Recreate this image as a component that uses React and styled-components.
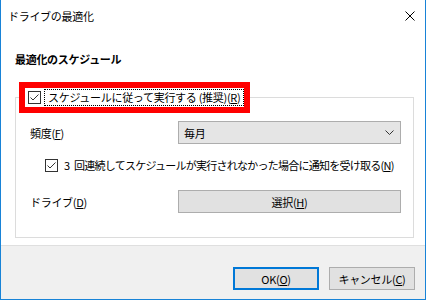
import React from 'react';
import styled, { createGlobalStyle } from 'styled-components';

const GlobalStyle = createGlobalStyle`
  html, body {
    margin: 0;
    padding: 0;
    background: #ffffff;
  }
  body {
    font-family: "Noto Sans CJK JP", "Noto Sans", sans-serif;
    font-size: 11px;
    color: #000000;
  }
`;

const Window = styled.div`
  width: 426px;
  height: 300px;
  box-sizing: border-box;
  border: 1px solid #1883d7;
  border-top: none;
  display: flex;
  flex-direction: column;
  background: #ffffff;
`;

const TitleBar = styled.div`
  height: 31px;
  flex: none;
  display: flex;
  align-items: center;
  justify-content: space-between;
  padding: 0 10px 0 7px;
`;

const Title = styled.span`
  font-size: 11px;
  letter-spacing: -0.3px;
  line-height: 16px;
`;

const Content = styled.div`
  flex: 1;
  display: flex;
  flex-direction: column;
  padding: 20px 11px 7px 14px;
`;

const Heading = styled.h2`
  margin: 0;
  font-size: 11px;
  font-weight: bold;
  line-height: 16px;
  letter-spacing: -0.3px;
`;

const Group = styled.fieldset`
  margin: 21px 0 0 0;
  padding: 0;
  border: 1px solid #dcdcdc;
  min-width: 0;
`;

const Legend = styled.legend`
  margin-left: 9px;
  padding: 0 0 0 3px;
  height: 19px;
  display: flex;
  align-items: center;
  gap: 3px;
  outline: 6px solid #ff0000;
`;

const Focus = styled.span`
  border: 1px dotted #000000;
  padding: 0 3px;
  line-height: 15px;
  letter-spacing: -0.3px;
`;

const GroupBody = styled.div`
  padding: 14px 12px 24px 14px;
  display: flex;
  flex-direction: column;
`;

const Row = styled.div`
  display: grid;
  grid-template-columns: 148px 1fr;
  align-items: center;
  margin-top: ${(p) => p.$mt || 0}px;
`;

const Label = styled.span`
  letter-spacing: -0.3px;
  line-height: 16px;
`;

const Select = styled.div`
  height: 23px;
  box-sizing: border-box;
  border: 1px solid #adadad;
  background: #e5e5e5;
  display: flex;
  align-items: center;
  justify-content: space-between;
  padding: 0 6px 0 5px;
  letter-spacing: -0.3px;
`;

const CheckRow = styled.label`
  display: flex;
  align-items: center;
  gap: 6px;
  height: 18px;
  margin: 12px 0 0 15px;
  white-space: nowrap;
  letter-spacing: -0.75px;
  word-spacing: 3px;
`;

const Box = styled.span`
  width: 13px;
  height: 13px;
  flex: none;
  box-sizing: border-box;
  border: 1px solid #333333;
  background: #ffffff;
  display: flex;
  align-items: center;
  justify-content: center;
`;

const Button = styled.button`
  font: inherit;
  letter-spacing: -0.3px;
  color: #000000;
  height: 23px;
  box-sizing: border-box;
  background: #e1e1e1;
  border: ${(p) => (p.$default ? '2px solid #0078d7' : '1px solid #adadad')};
  padding: 0;
  width: ${(p) => (p.$width ? `${p.$width}px` : '100%')};
`;

const Footer = styled.div`
  height: 54px;
  flex: none;
  box-sizing: border-box;
  border-top: 1px solid #dfdfdf;
  background: #f0f0f0;
  display: flex;
  justify-content: flex-end;
  align-items: flex-start;
  gap: 10px;
  padding: 21px 10px 0 0;
`;

function Check() {
  return (
    <Box>
      <svg width="11" height="11" viewBox="0 0 11 11">
        <polyline points="1.5,5.5 4,8 9.5,2.5" fill="none" stroke="#333333" strokeWidth="1" />
      </svg>
    </Box>
  );
}

export default function App() {
  return (
    <>
      <GlobalStyle />
      <Window>
        <TitleBar>
          <Title>ドライブの最適化</Title>
          <svg width="10" height="10" viewBox="0 0 10 10">
            <path d="M0.5 0.5 L9.5 9.5 M9.5 0.5 L0.5 9.5" stroke="#000000" strokeWidth="1" />
          </svg>
        </TitleBar>

        <Content>
          <Heading>最適化のスケジュール</Heading>

          <Group>
            <Legend>
              <Check />
              <Focus>スケジュールに従って実行する (推奨)(<u>R</u>)</Focus>
            </Legend>

            <GroupBody>
              <Row>
                <Label>頻度(<u>F</u>)</Label>
                <Select>
                  <span>毎月</span>
                  <svg width="9" height="5" viewBox="0 0 9 5">
                    <polyline points="0.5,0.5 4.5,4.5 8.5,0.5" fill="none" stroke="#333333" strokeWidth="1" />
                  </svg>
                </Select>
              </Row>

              <CheckRow>
                <Check />
                <span>3 回連続してスケジュールが実行されなかった場合に通知を受け取る(<u>N</u>)</span>
              </CheckRow>

              <Row $mt={16}>
                <Label>ドライブ(<u>D</u>)</Label>
                <Button>選択(<u>H</u>)</Button>
              </Row>
            </GroupBody>
          </Group>
        </Content>

        <Footer>
          <Button $default $width={86}>OK(<u>O</u>)</Button>
          <Button $width={86}>キャンセル(<u>C</u>)</Button>
        </Footer>
      </Window>
    </>
  );
}
